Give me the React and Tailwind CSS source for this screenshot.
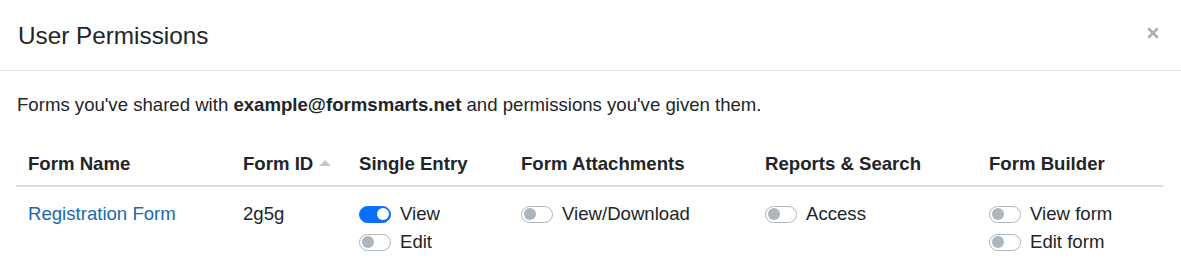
import { X } from "lucide-react";

function Toggle({ on, label }) {
  return (
    <label className="flex items-center h-7 cursor-pointer">
      <span
        className={`relative inline-block w-8 h-[17px] rounded-full border shrink-0 ${
          on ? "bg-[#0d6efd] border-[#0d6efd]" : "bg-white border-[#adb5bd]"
        }`}
      >
        <span
          className={`absolute top-[1.5px] w-3 h-3 rounded-full ${
            on ? "left-[17px] bg-white" : "left-[2px] bg-[#adb5bd]"
          }`}
        />
      </span>
      <span className="ml-[9px] text-[#212529]">{label}</span>
    </label>
  );
}

const COLS = [
  { label: "Form Name", w: "w-[215px]" },
  { label: "Form ID", w: "w-[116px]", sort: true },
  { label: "Single Entry", w: "w-[162px]" },
  { label: "Form Attachments", w: "w-[244px]" },
  { label: "Reports & Search", w: "w-[224px]" },
  { label: "Form Builder", w: "" },
];

export default function App() {
  return (
    <div className="w-[1181px] h-[276px] bg-white text-[#212529] text-[18.6px] leading-7 overflow-hidden"
      style={{ fontFamily: '"Liberation Sans", Arial, sans-serif' }}>
      {/* Header */}
      <div className="flex items-center justify-between pl-[18px] pr-4 h-[71px] border-b border-[#e5e5e5]">
        <h5 className="text-[24.3px] leading-[30px] pt-[2px]">User Permissions</h5>
        <button className="text-[#b0b0b0] mr-[4px] -mt-[4px]">
          <X className="w-[16px] h-[16px]" strokeWidth={4} />
        </button>
      </div>

      {/* Body */}
      <div className="pl-4 pr-[18px] pt-5">
        <p className="mb-4 pl-[1px]">
          Forms you've shared with <b>example@formsmarts.net</b> and permissions you've given them.
        </p>

        <table className="w-full table-fixed border-collapse">
          <thead>
            <tr className="border-b-2 border-[#dcdcdc]">
              {COLS.map((c) => (
                <th key={c.label} className={`${c.w} text-left font-bold px-3 pt-[15px] pb-[7px] align-bottom`}>
                  {c.label}
                  {c.sort && (
                    <span className="inline-block align-middle ml-[6px] mb-[4px] w-0 h-0 border-l-[6px] border-r-[6px] border-b-[6px] border-l-transparent border-r-transparent border-b-[#c8c8c8]" />
                  )}
                </th>
              ))}
            </tr>
          </thead>
          <tbody>
            <tr className="align-top">
              <td className="px-3 pt-[13px] pb-3">
                <a href="#" className="text-[#1a67b3]">Registration Form</a>
              </td>
              <td className="px-3 pt-[13px] pb-3">2g5g</td>
              <td className="px-3 pt-[13px] pb-3">
                <Toggle on label="View" />
                <Toggle label="Edit" />
              </td>
              <td className="px-3 pt-[13px] pb-3">
                <Toggle label="View/Download" />
              </td>
              <td className="px-3 pt-[13px] pb-3">
                <Toggle label="Access" />
              </td>
              <td className="px-3 pt-[13px] pb-3">
                <Toggle label="View form" />
                <Toggle label="Edit form" />
              </td>
            </tr>
          </tbody>
        </table>
      </div>
    </div>
  );
}
